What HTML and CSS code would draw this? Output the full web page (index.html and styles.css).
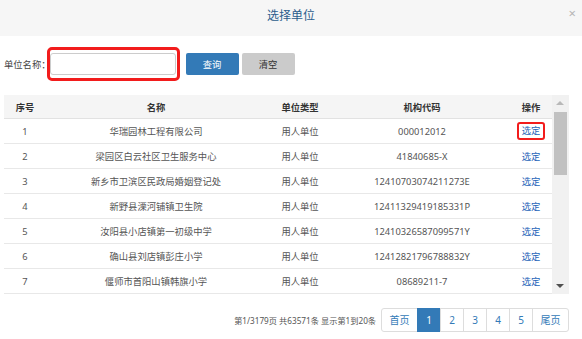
FILE: index.html
```html
<!DOCTYPE html>
<html lang="zh-CN">
<head>
    <meta charset="UTF-8">
    <meta name="viewport" content="width=device-width, initial-scale=1.0">
    <title>选择单位</title>
    <link rel="stylesheet" href="styles.css">
</head>
<body>
    <div class="dialog-head">
        <span class="dialog-title">选择单位</span>
        <span class="dialog-close">×</span>
    </div>

    <div class="search-bar">
        <label class="search-label" for="unitName">单位名称：</label>
        <div class="mark-box input-mark">
            <input type="text" id="unitName" class="search-input">
        </div>
        <button class="btn btn-primary">查询</button>
        <button class="btn btn-default">清空</button>
    </div>

    <div class="grid-wrap">
        <table class="grid">
            <colgroup>
                <col style="width: 42px">
                <col style="width: 220px">
                <col style="width: 68px">
                <col style="width: 176px">
                <col style="width: 42px">
            </colgroup>
            <thead>
                <tr>
                    <th>序号</th>
                    <th>名称</th>
                    <th>单位类型</th>
                    <th>机构代码</th>
                    <th>操作</th>
                </tr>
            </thead>
            <tbody>
                <tr>
                    <td>1</td>
                    <td>华瑞园林工程有限公司</td>
                    <td>用人单位</td>
                    <td>000012012</td>
                    <td><a class="pick mark-box" href="#">选定</a></td>
                </tr>
                <tr>
                    <td>2</td>
                    <td>梁园区白云社区卫生服务中心</td>
                    <td>用人单位</td>
                    <td>41840685-X</td>
                    <td><a class="pick" href="#">选定</a></td>
                </tr>
                <tr>
                    <td>3</td>
                    <td>新乡市卫滨区民政局婚姻登记处</td>
                    <td>用人单位</td>
                    <td>12410703074211273E</td>
                    <td><a class="pick" href="#">选定</a></td>
                </tr>
                <tr>
                    <td>4</td>
                    <td>新野县溧河铺镇卫生院</td>
                    <td>用人单位</td>
                    <td>12411329419185331P</td>
                    <td><a class="pick" href="#">选定</a></td>
                </tr>
                <tr>
                    <td>5</td>
                    <td>汝阳县小店镇第一初级中学</td>
                    <td>用人单位</td>
                    <td>12410326587099571Y</td>
                    <td><a class="pick" href="#">选定</a></td>
                </tr>
                <tr>
                    <td>6</td>
                    <td>确山县刘店镇彭庄小学</td>
                    <td>用人单位</td>
                    <td>12412821796788832Y</td>
                    <td><a class="pick" href="#">选定</a></td>
                </tr>
                <tr>
                    <td>7</td>
                    <td>偃师市首阳山镇韩旗小学</td>
                    <td>用人单位</td>
                    <td>08689211-7</td>
                    <td><a class="pick" href="#">选定</a></td>
                </tr>
            </tbody>
        </table>
        <div class="scrollbar">
            <span class="arrow arrow-up"></span>
            <div class="thumb"></div>
            <span class="arrow arrow-down"></span>
        </div>
    </div>

    <div class="pager">
        <span class="pager-info">第1/3179页 共63571条 显示第1到20条</span>
        <ul class="pages">
            <li>首页</li>
            <li class="active">1</li>
            <li>2</li>
            <li>3</li>
            <li>4</li>
            <li>5</li>
            <li>尾页</li>
        </ul>
    </div>
</body>
</html>
```

FILE: styles.css
```css
body {
    margin: 0;
    font-family: "Noto Sans", "Noto Sans CJK SC", sans-serif;
    font-size: 9.3px;
    color: #555;
    background: #fff;
}
.dialog-head {
    position: relative;
    height: 36px;
    background: #f6f6f6;
    display: flex;
    align-items: center;
    justify-content: center;
}
.dialog-title {
    font-size: 12px;
    color: #2c5d8c;
    margin-top: -6px;
}
.dialog-close {
    position: absolute;
    right: 6px;
    top: 4px;
    font-size: 13px;
    color: #b5b5b5;
}
.search-bar {
    display: flex;
    align-items: center;
    margin: 11px 0 0 4px;
    height: 34px;
}
.search-label {
    color: #444;
    margin-right: -4px;
}
.mark-box {
    border: 3px solid #f21c1c;
    border-radius: 5px;
}
.input-mark {
    padding: 3px 1px 3px 0;
    display: flex;
}
.search-input {
    width: 126px;
    height: 22px;
    box-sizing: border-box;
    border: 1px solid #ccc;
    border-radius: 3px;
    margin: 0;
    padding: 0 4px;
}
.btn {
    height: 22px;
    width: 53px;
    border: none;
    border-radius: 2px;
    font-family: inherit;
    font-size: 9.3px;
    padding: 0;
}
.btn-primary {
    background: #337ab7;
    color: #fff;
    margin-left: 6px;
}
.btn-default {
    background: #cbcbcb;
    color: #333;
    margin-left: 3px;
}
.grid-wrap {
    display: flex;
    margin: 14px 13px 0 4px;
    height: 199px;
}
.grid {
    width: 548px;
    border-collapse: collapse;
    table-layout: fixed;
    align-self: flex-start;
}
.grid th {
    height: 23px;
    background: #f5f5f5;
    color: #333;
    font-weight: bold;
    border-bottom: 1px solid #e2e2e2;
    padding: 0;
}
.grid td {
    height: 24px;
    text-align: center;
    padding: 0;
    border-bottom: 1px solid #e8e8e8;
    white-space: nowrap;
}
.pick {
    color: #2463b8;
    text-decoration: none;
}
.pick.mark-box {
    display: inline-block;
    border-width: 2.5px;
    border-radius: 3px;
    padding: 1px 3px;
    line-height: 12px;
}
.scrollbar {
    position: relative;
    width: 17px;
    background: #f1f1f1;
}
.thumb {
    margin: 17px 2px 0 2px;
    height: 63px;
    background: #c1c1c1;
}
.arrow {
    position: absolute;
    left: 4px;
    width: 0;
    height: 0;
    border-left: 4px solid transparent;
    border-right: 4px solid transparent;
}
.arrow-up {
    top: 6px;
    border-bottom: 4px solid #b8b8b8;
}
.arrow-down {
    bottom: 6px;
    border-top: 4px solid #505050;
}
.pager {
    display: flex;
    justify-content: flex-end;
    align-items: center;
    margin: 14px 13px 0 0;
}
.pager-info {
    font-size: 8.2px;
    color: #555;
    margin-right: 5px;
}
.pages {
    display: flex;
    list-style: none;
    margin: 0;
    padding: 0;
}
.pages li {
    height: 24px;
    line-height: 22px;
    width: 24px;
    text-align: center;
    border: 1px solid #ddd;
    margin-left: -1px;
    color: #337ab7;
    font-size: 10px;
    box-sizing: border-box;
}
.pages li:first-child,
.pages li:last-child {
    width: 37px;
}
.pages li:first-child {
    margin-left: 0;
    border-radius: 3px 0 0 3px;
}
.pages li:last-child {
    border-radius: 0 3px 3px 0;
}
.pages li.active {
    background: #337ab7;
    border-color: #337ab7;
    color: #fff;
}
```
